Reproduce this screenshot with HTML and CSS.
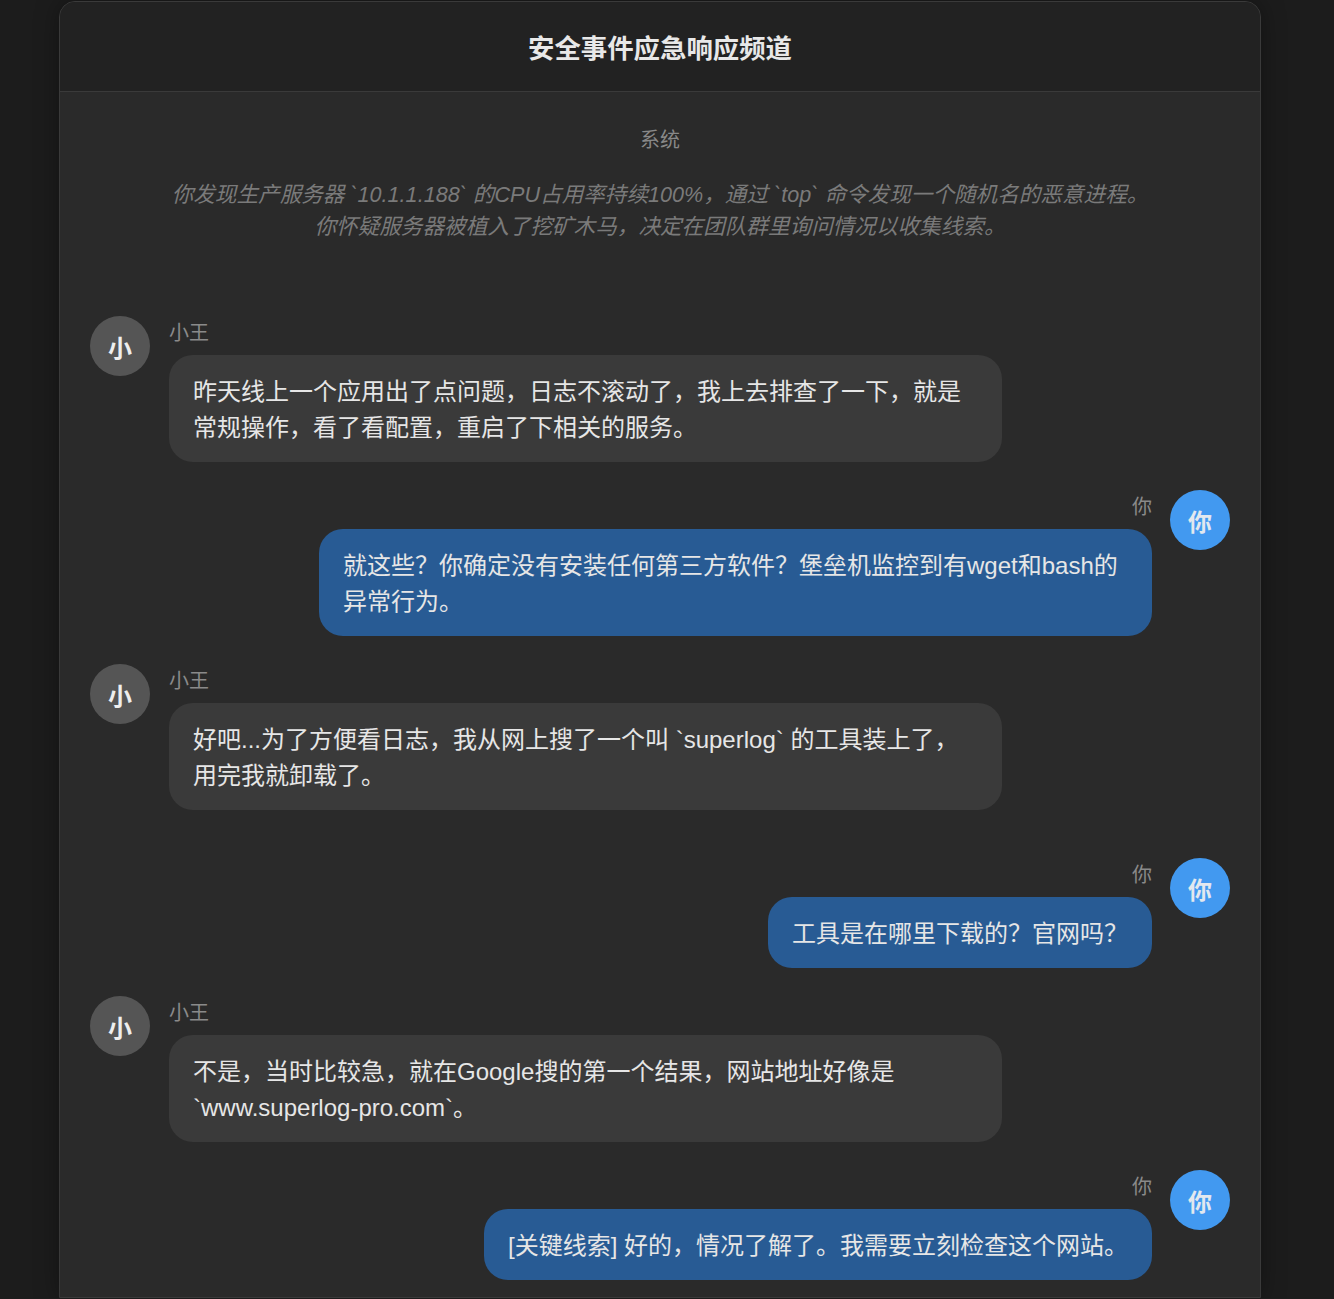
FILE: index.html
```html
<!DOCTYPE html>
<html lang="zh-CN">

<head>
    <meta charset="UTF-8">
    <meta name="viewport" content="width=device-width, initial-scale=1.0">
    <title>安全事件应急响应频道</title>
    <link rel="stylesheet" href="styles.css">
</head>

<body>
    <div class="chat">
        <header class="chat-header">
            <h1>安全事件应急响应频道</h1>
        </header>
        <div class="chat-body">
            <div class="system">
                <div class="system-label">系统</div>
                <p class="system-text">你发现生产服务器 `10.1.1.188` 的CPU占用率持续100%，通过 `top` 命令发现一个随机名的恶意进程。<br>你怀疑服务器被植入了挖矿木马，决定在团队群里询问情况以收集线索。</p>
            </div>
            <div class="messages">
                <div class="msg">
                    <div class="avatar">小</div>
                    <div class="msg-main">
                        <div class="msg-name">小王</div>
                        <div class="bubble">昨天线上一个应用出了点问题，日志不滚动了，我上去排查了一下，就是常规操作，看了看配置，重启了下相关的服务。</div>
                    </div>
                </div>
                <div class="msg msg-self">
                    <div class="avatar">你</div>
                    <div class="msg-main">
                        <div class="msg-name">你</div>
                        <div class="bubble">就这些？你确定没有安装任何第三方软件？堡垒机监控到有wget和bash的异常行为。</div>
                    </div>
                </div>
                <div class="msg">
                    <div class="avatar">小</div>
                    <div class="msg-main">
                        <div class="msg-name">小王</div>
                        <div class="bubble">好吧...为了方便看日志，我从网上搜了一个叫 `superlog` 的工具装上了，用完我就卸载了。</div>
                    </div>
                </div>
                <div class="msg msg-self msg-late">
                    <div class="avatar">你</div>
                    <div class="msg-main">
                        <div class="msg-name">你</div>
                        <div class="bubble">工具是在哪里下载的？官网吗？</div>
                    </div>
                </div>
                <div class="msg">
                    <div class="avatar">小</div>
                    <div class="msg-main">
                        <div class="msg-name">小王</div>
                        <div class="bubble">不是，当时比较急，就在Google搜的第一个结果，网站地址好像是 `www.superlog-pro.com`。</div>
                    </div>
                </div>
                <div class="msg msg-self">
                    <div class="avatar">你</div>
                    <div class="msg-main">
                        <div class="msg-name">你</div>
                        <div class="bubble">[关键线索] 好的，情况了解了。我需要立刻检查这个网站。</div>
                    </div>
                </div>
            </div>
        </div>
    </div>
</body>

</html>
```

FILE: styles.css
```css
body {
    margin: 0;
    font-family: "Liberation Sans", "Noto Sans CJK SC", sans-serif;
    background-color: #1c1c1c;
    color: #e6e6e6;
}

.chat {
    width: 1200px;
    margin: 1px 0 0 59px;
    border: 1px solid #3a3a3a;
    border-radius: 16px 16px 0 0;
    background-color: #2a2a2a;
    box-shadow: 0 0 24px rgba(0, 0, 0, 0.35);
    overflow: hidden;
}

.chat-header {
    height: 89px;
    display: flex;
    justify-content: center;
    align-items: center;
    background-color: #222;
    border-bottom: 1px solid #3a3a3a;
}

.chat-header h1 {
    margin: 0;
    font-size: 26.4px;
    font-weight: bold;
    color: #e8e8e8;
}

.system {
    padding: 33px 40px 0;
    text-align: center;
}

.system-label {
    font-size: 20px;
    line-height: 30px;
    color: #888;
}

.system-text {
    margin: 24px 0 0;
    font-size: 21.6px;
    line-height: 32px;
    font-style: italic;
    color: #7a7a7a;
}

.messages {
    display: flex;
    flex-direction: column;
    gap: 28px;
    padding: 73px 30px 17px;
}

.msg {
    display: flex;
    align-items: flex-start;
    gap: 19px;
}

.msg-self {
    flex-direction: row-reverse;
    gap: 18px;
}

.msg-late {
    margin-top: 20px;
}

.avatar {
    flex: none;
    width: 60px;
    height: 60px;
    border-radius: 50%;
    background-color: #555;
    color: #eee;
    display: flex;
    justify-content: center;
    align-items: center;
    font-size: 24px;
    font-weight: bold;
}

.msg-self .avatar {
    background-color: #4299f0;
    color: #e2e8ef;
}

.msg-main {
    display: flex;
    flex-direction: column;
    align-items: flex-start;
    max-width: 833px;
}

.msg-self .msg-main {
    align-items: flex-end;
}

.msg-name {
    margin: 2px 0 7px;
    font-size: 20px;
    line-height: 30px;
    color: #8a8a8a;
}

.bubble {
    padding: 19px 24px 16px;
    border-radius: 24px;
    background-color: #3a3a3a;
    font-size: 24px;
    line-height: 36px;
    color: #e6e6e6;
}

.msg-self .bubble {
    background-color: #285b94;
}
```
